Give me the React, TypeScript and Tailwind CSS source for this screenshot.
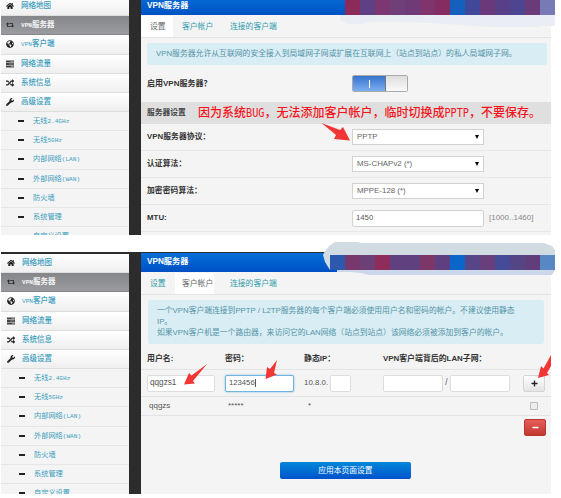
import type { ReactNode } from "react";
import { FaHome, FaRetweet, FaGlobeAmericas, FaRandom, FaWrench, FaPlus, FaMinus } from "react-icons/fa";

function TrafficIcon({ className }: { className?: string }) {
  return (
    <svg viewBox="0 0 16 16" className={className}>
      <path d="M0 1H16V5H0ZM0 6H16V10H0ZM0 11H16V15H0Z" fill="#444" />
      <path d="M9 2.500H15V3.500H9ZM6 7.500H15V8.500H6ZM10 12.500H15V13.500H10Z" fill="#ccc" />
    </svg>
  );
}

const menu = [
  { icon: FaHome, text: ["", "网络地图"] },
  { icon: FaRetweet, text: ["VPN", "服务器"], active: true },
  { icon: FaGlobeAmericas, text: ["VPN", "客户端"] },
  { icon: TrafficIcon, text: ["", "网络流量"] },
  { icon: FaRandom, text: ["", "系统信息"] },
  { icon: FaWrench, text: ["", "高级设置"] },
];

const subMenu = [
  ["无线", "2.4GHz"],
  ["无线", "5GHz"],
  ["内部网络", "(LAN)"],
  ["外部网络", "(WAN)"],
  ["防火墙", ""],
  ["系统管理", ""],
  ["自定义设置", ""],
];

function Mono({ children }: { children: ReactNode }) {
  return <span className="font-['Liberation_Mono',monospace] text-[6.1px]">{children}</span>;
}

function Sidebar({ pad }: { pad: string }) {
  return (
    <nav className="w-32 shrink-0 bg-[#f4f4f4] text-[7.5px] whitespace-nowrap text-[#3a9dbd]">
      {menu.map(({ icon: Icon, text, active }) => (
        <div
          key={text.join("")}
          className={`flex h-[19.2px] items-center border-b ${pad} ${
            active
              ? "border-[#858585] bg-linear-to-b from-[#858689] to-[#9b9ca0] font-bold text-[#f4f4f4]"
              : "border-[#dedede] bg-linear-to-b from-white to-[#efefef] font-medium"
          }`}
        >
          <Icon className="mr-[7px] size-2 text-[#222]" />
          <span>
            {text[0] && <Mono>{text[0]}</Mono>}
            {text[1]}
          </span>
        </div>
      ))}
      {subMenu.map(([cjk, latin]) => (
        <div key={cjk + latin} className={`flex h-[19.15px] items-center border-b border-[#e6e6e6] ${pad}`}>
          <i className="mr-[9px] ml-3 h-[2px] w-[6px] bg-[#222]" />
          <span className="text-[7.2px]">
            {cjk}
            {latin && <Mono>{latin}</Mono>}
          </span>
        </div>
      ))}
    </nav>
  );
}

function Tabs({ active }: { active: number }) {
  const on = "bg-white text-[#666]";
  const off = "text-[#2f9cad]";
  return (
    <div className="flex h-[23px] items-end border-b border-[#e4e4e4] text-[7.8px] leading-none">
      <span className={`flex h-[21px] w-8 items-center pl-[9px] ${active === 0 ? on : off}`}>设置</span>
      <span className={`ml-[2px] flex h-[21px] w-[39px] items-center pl-[7px] ${active === 1 ? on : off}`}>客户帐户</span>
      <span className={`ml-[8px] flex h-[21px] items-center pl-[8px] ${off}`}>连接的客户端</span>
    </div>
  );
}

function SettingRow({ label, children }: { label: string; children: ReactNode }) {
  return (
    <div className="flex h-[27px] items-center border-b border-[#e7e7e7] pl-[6px]">
      <span className="w-[205px] shrink-0 font-bold tracking-[0.1px] text-[#333]">{label}</span>
      {children}
    </div>
  );
}

function Select({ value }: { value: string }) {
  return (
    <div className="flex h-4 w-[132px] items-center justify-between border border-[#d2d2d2] bg-white pr-1 pl-[4px] text-[7.9px] text-[#666]">
      {value}
      <i className="border-x-2 border-t-4 border-x-transparent border-t-black" />
    </div>
  );
}

function Field({ className, children }: { className: string; children?: ReactNode }) {
  return (
    <div className={`flex h-[17px] shrink-0 items-center rounded-[2px] border bg-white text-[#555] ${className}`}>{children}</div>
  );
}

function Cells({ colors, start }: { colors: string[]; start: number }) {
  return (
    <>
      {colors.map((c, i) => (
        <rect key={i} x={start + i * 15} width="15" height="15" fill={c} />
      ))}
    </>
  );
}

const topCells = ["#8c2a5a", "#5f4084", "#7d3770", "#6e3f78", "#6e3b78", "#80346c", "#852d62", "#1560bc", "#41489a", "#69397a", "#584088", "#4e4590", "#6b3a78", "#777ab5"];
const bottomCells = ["#2c58ae", "#78386e", "#6c3f76", "#8e2d5c", "#604080", "#60407f", "#7c3668", "#5e4080", "#0a66c8", "#584488", "#683f7c", "#444c98", "#544585", "#603e7c", "#5888c4"];

function Latin({ children }: { children: ReactNode }) {
  return (
    <span className="inline-block origin-bottom scale-y-[1.2] font-['DejaVu_Sans_Mono',monospace] text-[10.2px] leading-none">{children}</span>
  );
}

export default function App() {
  return (
    <main className="relative h-[498px] w-[561px] overflow-hidden bg-white font-['Liberation_Sans','Noto_Sans_CJK_SC',sans-serif] text-[7.75px] leading-none whitespace-nowrap">
      <section className="ml-px flex h-[235px] w-[550px] overflow-hidden bg-[#2c2c2c]">
        <div className="-mt-[3px]">
          <Sidebar pad="pl-[5px]" />
        </div>
        <div className="ml-3 w-[410px] bg-[#f4f4f4]">
          <div className="flex h-[15px] items-center bg-linear-to-b from-[#0667d2] to-[#0052c4] pb-[3px] pl-[6px] text-[8.2px] font-bold text-white">VPN服务器</div>
          <Tabs active={0} />
          <div className="mt-[5px] mr-1 ml-[6px] flex h-[22px] items-center rounded-[2px] bg-[#d9edf5] pl-[9px] text-[7.83px] text-[#5593a6]">
            VPN服务器允许从互联网的安全接入到局域网子网或扩展在互联网上（站点到站点）的私人局域网子网。
          </div>
          <div className="flex h-[37px] items-center pl-[6px] font-bold text-[#333]">
            <span className="w-[205px] text-[8px]">启用VPN服务器？</span>
            <div className="flex h-[17px] w-14 overflow-hidden rounded-[2px] border border-[#aaa]">
              <span className="flex w-8 items-center justify-center bg-linear-to-b from-[#3573cb] to-[#7caef0]">
                <i className="h-2 w-px bg-white" />
              </span>
              <span className="flex-1 border-l border-[#777] bg-linear-to-b from-[#ddd] to-[#fafafa]" />
            </div>
          </div>
          <div className="flex h-[22px] items-center bg-[#dfdfdf] pl-[6px]">
            <span className="w-[51px] shrink-0 font-bold text-[#444]">服务器设置</span>
            <span className="text-[12px] font-medium text-[#f5141c]">
              因为系统<Latin>BUG</Latin>，无法添加客户帐户，临时切换成<Latin>PPTP</Latin>，不要保存。
            </span>
          </div>
          <SettingRow label="VPN服务器协议：">
            <Select value="PPTP" />
          </SettingRow>
          <SettingRow label="认证算法：">
            <Select value="MS-CHAPv2 (*)" />
          </SettingRow>
          <SettingRow label="加密密码算法：">
            <Select value="MPPE-128 (*)" />
          </SettingRow>
          <SettingRow label="MTU:">
            <Field className="w-[132px] border-[#d2d2d2] pl-[3px]">1450</Field>
            <span className="ml-[5px] text-[8px] text-[#888]">[1000..1460]</span>
          </SettingRow>
        </div>
      </section>

      <section className="mt-[17px] ml-px flex h-[242px] w-[550px] overflow-hidden bg-[#2c2c2c]">
        <div className="mt-[2px]">
          <Sidebar pad="pl-[6px]" />
        </div>
        <div className="mt-px ml-3 w-[410px] bg-[#f4f4f4]">
          <div className="flex h-[19px] items-center bg-linear-to-b from-[#0870d8] to-[#004fc4] pl-[6px] text-[8.2px] font-bold text-white">VPN服务器</div>
          <Tabs active={1} />
          <div className="mt-[5px] mr-[7px] ml-[7px] h-11 rounded-[3px] bg-[#d9edf5] pt-[5px] pl-[9px] text-[7.8px] leading-[11px] text-[#5593a6]">
            <p>一个VPN客户端连接到PPTP / L2TP服务器的每个客户端必须使用用户名和密码的帐户。不建议使用静态</p>
            <p>IP。</p>
            <p>如果VPN客户机是一个路由器，来访问它的LAN网络（站点到站点）该网络必须被添加到客户的帐户。</p>
          </div>
          <div className="flex h-[26px] items-center border-b border-[#e3e3e3] pt-1 pl-[6px] text-[7.9px] font-bold text-[#333]">
            <span className="w-[78px]">用户名:</span>
            <span className="w-[79px]">密码：</span>
            <span className="w-[79px]">静态IP：</span>
            <span>VPN客户端背后的LAN子网：</span>
          </div>
          <div className="flex h-[27px] items-center border-b border-[#e3e3e3] pl-[6px] text-[8.2px] text-[#555]">
            <Field className="w-[68px] border-[#ddd] pl-[2px]">qqgzs1</Field>
            <Field className="ml-[10px] w-[69px] border-[#72b4e0] pl-[3px] shadow-[0_0_2px_#72b4e0]">
              <span className="text-[7.7px]">123456</span>
              <i className="h-[8px] w-px bg-[#555]" />
            </Field>
            <span className="ml-[10px] w-[26px] text-[7.9px]">10.8.0.</span>
            <Field className="w-[21px] border-[#ddd]" />
            <Field className="ml-8 w-[60px] border-[#ddd]" />
            <span className="w-[7px] text-center">/</span>
            <Field className="w-[60px] border-[#ddd]" />
            <button className="ml-[13px] flex h-[17px] w-[22px] shrink-0 items-center justify-center rounded-[2px] border border-[#d5d5d5] bg-linear-to-b from-white to-[#e4e4e4]">
              <FaPlus className="size-[7px] text-[#222]" />
            </button>
          </div>
          <div className="flex h-[19px] items-center border-b border-[#e3e3e3] pl-[8px] text-[8px] text-[#555]">
            <span className="w-[79px]">qqgzs</span>
            <span className="w-[80px]">*****</span>
            <span>*</span>
            <i className="mr-[13px] ml-auto size-2 rounded-[1px] border border-[#bbb] bg-[#eee]" />
          </div>
          <div className="mt-[3px] mr-[5px] ml-auto flex h-[17px] w-[22px] items-center justify-center rounded-[2px] border border-[#b83531] bg-linear-to-b from-[#e65c57] to-[#c23732]">
            <FaMinus className="size-[7px] text-white" />
          </div>
          <button className="mt-[26px] ml-[139px] flex h-[17px] w-[131px] items-center justify-center rounded-[2px] bg-linear-to-b from-[#0787d8] to-[#0051cb] text-white">
            应用本页面设置
          </button>
        </div>
      </section>

      <svg className="absolute inset-0" width="561" height="498" viewBox="0 0 561 498">
        <path d="M340 15H555V26H539V27H490L460 25L430 23L400 22L370 22L362 24H348L340 20Z" fill="#eaedf3" />
        <Cells colors={topCells} start={345} />
        <path d="M323 255L325 251L329 246L335 242H358L361 243H544L552 246L555 250V255Z" fill="#d1dce2" />
        <path d="M323 255H330V270L325 262Z" fill="#d1dce2" />
        <path d="M337 270H555L552 275H370L360 273L350 272H337Z" fill="#ccd8e9" />
        <g transform="translate(0 255)">
          <Cells colors={bottomCells} start={330} />
        </g>
        <g fill="#f23635">
          <path d="M321.5 123L340 130L343 127L350 140.5L334 139L336 135Z" />
          <path d="M207 364L193 381L195 383.5L184 384.5L189 373L191.500 375.500Z" />
          <path d="M277 360L274 373L277 374.500L265.500 379L267 367L270 369Z" />
          <path d="M551 355V366L547 373L549 375L538 378L541 366L543.500 368.500Z" />
        </g>
      </svg>
    </main>
  );
}
